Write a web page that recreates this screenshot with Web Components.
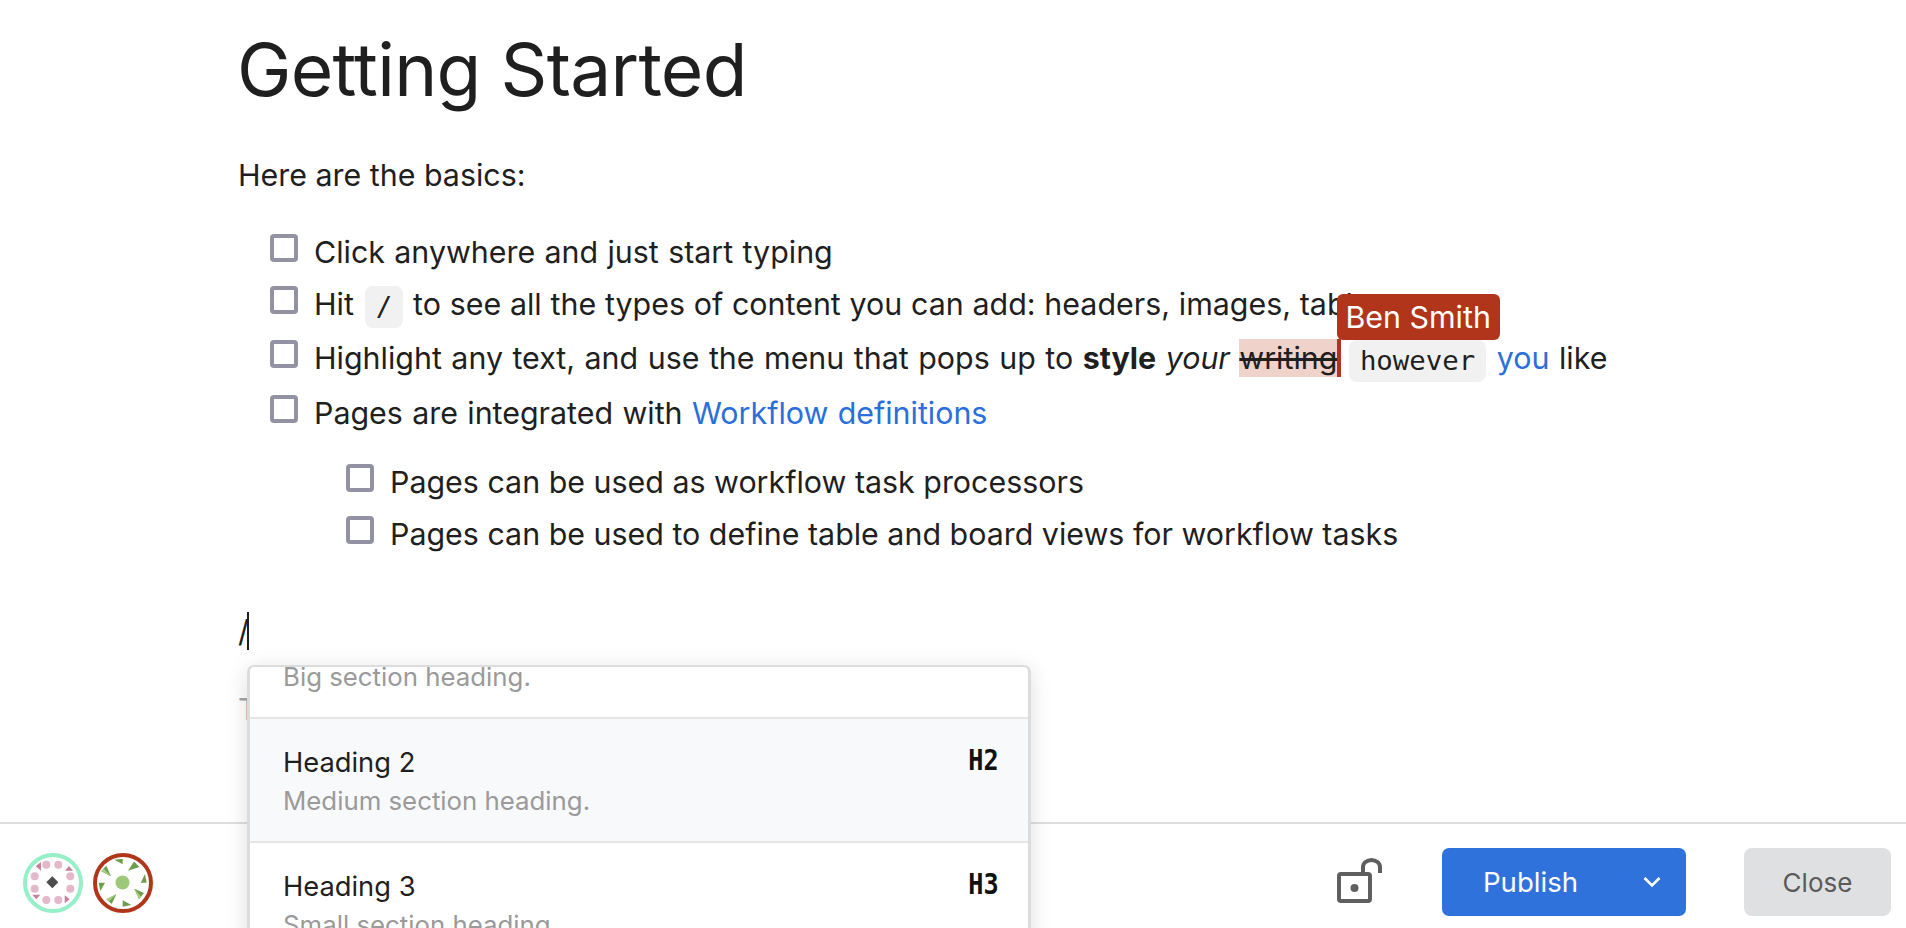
<!DOCTYPE html>
<html>
<head>
<meta charset="utf-8">
<style>
    html, body { margin: 0; padding: 0; height: 100%; overflow: hidden; background: #fff; }
    body { font-family: Inter, "Liberation Sans", sans-serif; color: #1f1f1f; }
</style>
</head>
<body>
<doc-page>
    <h-title>Getting Started</h-title>
    <doc-para>Here are the basics:</doc-para>
    <task-list>
        <task-item loose>Click anywhere and just start typing</task-item>
        <task-item tall>Hit <inline-code>/</inline-code> to see all the types of content you can add: headers, images, tabl</task-item>
        <task-item tall wide>Highlight any text, and use the menu that pops up to <b>style</b> <i>your</i> <remote-sel>writing</remote-sel> <inline-code>however</inline-code> <a-link>you</a-link> like</task-item>
        <task-item loose>Pages are integrated with <a-link>Workflow definitions</a-link></task-item>
    </task-list>
    <task-list nested>
        <task-item>Pages can be used as workflow task processors</task-item>
        <task-item>Pages can be used to define table and board views for workflow tasks</task-item>
    </task-list>
    <slash-line></slash-line>
    <slash-menu>
        <menu-row title="Heading 1" desc="Big section heading." key="H1"></menu-row>
        <menu-row title="Heading 2" desc="Medium section heading." key="H2" active></menu-row>
        <menu-row title="Heading 3" desc="Small section heading." key="H3"></menu-row>
    </slash-menu>
    <app-footer slot="footer"></app-footer>
</doc-page>

<script>
const pageTpl = document.createElement('template')
pageTpl.innerHTML = `
<style>
    :host {
        position: relative;
        display: flex;
        flex-direction: column;
        height: 100vh;
        overflow: hidden;
        font-family: Inter, "Liberation Sans", sans-serif;
        font-size: 30.4px;
        color: #1f1f1f;
    }
    main {
        flex: 1;
        min-height: 0;
        padding: 24px 0 0 238px;
    }
</style>
<main><slot></slot></main>
<slot name="footer"></slot>
`
class DocPage extends HTMLElement {
    constructor() {
        super()
        this.attachShadow({ mode: 'open' })
        this.shadowRoot.appendChild(pageTpl.content.cloneNode(true))
    }
}
customElements.define('doc-page', DocPage)

class HTitle extends HTMLElement {
    constructor() {
        super()
        this.attachShadow({ mode: 'open' }).innerHTML = `
        <style>
            :host { display: block; margin-left: -1px; font-size: 73px; line-height: 92px; font-weight: 400; letter-spacing: -0.7px; color: #1f1f1f; }
        </style><slot></slot>`
    }
}
customElements.define('h-title', HTitle)

class DocPara extends HTMLElement {
    constructor() {
        super()
        this.attachShadow({ mode: 'open' }).innerHTML = `
        <style>
            :host { display: block; line-height: 52px; margin-top: 33px; }
        </style><slot></slot>`
    }
}
customElements.define('doc-para', DocPara)

class TaskList extends HTMLElement {
    constructor() {
        super()
        this.attachShadow({ mode: 'open' }).innerHTML = `
        <style>
            :host { display: block; margin: 25px 0 0 32px; }
            :host([nested]) { margin: 17px 0 0 108px; }
        </style><slot></slot>`
    }
}
customElements.define('task-list', TaskList)

class TaskItem extends HTMLElement {
    constructor() {
        super()
        this.attachShadow({ mode: 'open' }).innerHTML = `
        <style>
            :host { display: flex; align-items: flex-start; gap: 16px; line-height: 52px; white-space: nowrap; }
            :host([loose]) { word-spacing: 0.8px; }
            :host([tall]) { height: 54px; word-spacing: 0.25px; }
            :host([wide]) { height: 55px; word-spacing: 0.95px; }
            .box {
                flex: none;
                box-sizing: border-box;
                width: 28px;
                height: 28px;
                margin-top: 8px;
                border: 4px solid #9292a2;
                border-radius: 4px;
            }
        </style><span class="box"></span><span><slot></slot></span>`
    }
}
customElements.define('task-item', TaskItem)

class InlineCode extends HTMLElement {
    constructor() {
        super()
        this.attachShadow({ mode: 'open' }).innerHTML = `
        <style>
            :host {
                display: inline-block;
                font-family: "DejaVu Sans Mono", "Liberation Mono", monospace;
                font-size: 27.4px;
                line-height: 42px;
                padding: 0 11px;
                margin: 0 1px 0 2px;
                background: #f1f1f1;
                border-radius: 8px;
                vertical-align: -1px;
            }
        </style><slot></slot>`
    }
}
customElements.define('inline-code', InlineCode)

class ALink extends HTMLElement {
    constructor() {
        super()
        this.attachShadow({ mode: 'open' }).innerHTML = `<style>:host { color: #2a6fdb; }</style><slot></slot>`
    }
}
customElements.define('a-link', ALink)

// someone else's selection, with their name flag on the caret
class RemoteSel extends HTMLElement {
    constructor() {
        super()
        this.attachShadow({ mode: 'open' }).innerHTML = `
        <style>
            :host { position: relative; display: inline-block; line-height: 38px; background: #efd3cb; text-decoration: line-through; }
            .caret { position: absolute; right: -4px; top: 0; bottom: 0; width: 4px; background: #b0351a; }
            .flag {
                position: absolute;
                left: 100%;
                bottom: 37px;
                height: 46px;
                padding: 0 9px 0 8px;
                line-height: 46px;
                font-size: 30.4px;
                word-spacing: 0;
                color: #fff;
                background: #b0351a;
                border-radius: 6px;
                white-space: nowrap;
            }
        </style><slot></slot><span class="caret"></span><span class="flag">Ben Smith</span>`
    }
}
customElements.define('remote-sel', RemoteSel)

class SlashLine extends HTMLElement {
    constructor() {
        super()
        this.attachShadow({ mode: 'open' }).innerHTML = `
        <style>
            :host { display: block; margin-top: 52px; height: 38px; line-height: 38px; position: relative; }
            .caret { position: absolute; left: 9px; top: 0; width: 2px; height: 38px; background: #1f1f1f; }
            .hint { position: absolute; left: 0; top: 78px; color: #a6a6a6; line-height: 38px; }
        </style>/<span class="caret"></span><span class="hint">T</span>`
    }
}
customElements.define('slash-line', SlashLine)

class SlashMenu extends HTMLElement {
    constructor() {
        super()
        this.attachShadow({ mode: 'open' }).innerHTML = `
        <style>
            :host {
                position: absolute;
                left: 247px;
                top: 665px;
                width: 784px;
                height: 300px;
                box-sizing: border-box;
                overflow: hidden;
                background: #fff;
                border: 2px solid #dcdcdc;
                border-width: 2px 3px 0 3px;
                border-radius: 7px 7px 0 0;
                box-shadow: 0 4px 22px rgba(0,0,0,0.13);
            }
            .scroll { margin-top: -72px; }
        </style><div class="scroll"><slot></slot></div>`
    }
}
customElements.define('slash-menu', SlashMenu)

class MenuRow extends HTMLElement {
    constructor() {
        super()
        this.attachShadow({ mode: 'open' }).innerHTML = `
        <style>
            :host {
                display: flex;
                justify-content: space-between;
                box-sizing: border-box;
                height: 124px;
                padding: 25px 29px 0 33px;
                border-bottom: 2px solid #e4e5e7;
                background: #fff;
            }
            :host([active]) { background: #f8f9fb; }
            .title { font-size: 27.3px; line-height: 38px; color: #1f1f1f; }
            .desc { font-size: 25.8px; line-height: 38px; color: #9a9a9a; }
            .key {
                font-family: "DejaVu Sans Mono", "Liberation Mono", monospace;
                font-weight: 700;
                font-size: 28px;
                line-height: 34px;
                color: #111;
                transform: scaleX(0.9);
                transform-origin: right center;
            }
        </style>
        <div><div class="title"></div><div class="desc"></div></div>
        <div class="key"></div>`
        this.shadowRoot.querySelector('.title').textContent = this.getAttribute('title')
        this.shadowRoot.querySelector('.desc').textContent = this.getAttribute('desc')
        this.shadowRoot.querySelector('.key').textContent = this.getAttribute('key')
    }
}
customElements.define('menu-row', MenuRow)

const footerTpl = document.createElement('template')
footerTpl.innerHTML = `
<style>
    :host {
        display: flex;
        align-items: center;
        flex: none;
        box-sizing: border-box;
        height: 106px;
        padding: 0 15px 0 23px;
        border-top: 2px solid #dedede;
        background: #fff;
    }
    .avatars { display: flex; gap: 10px; margin-top: 14px; }
    svg { display: block; }
    .right { display: flex; align-items: center; margin-left: auto; margin-top: 12px; }
    .lock { margin-right: 59px; margin-top: -3px; }
    button {
        font: 400 27.6px Inter, "Liberation Sans", sans-serif;
        height: 68px;
        border: 0;
        padding: 0;
    }
    .publish {
        width: 244px;
        display: flex;
        align-items: center;
        justify-content: space-between;
        padding: 0 25px 0 41px;
        box-sizing: border-box;
        color: #fff;
        background: #2f72dc;
        border-radius: 7px;
    }
    .close {
        width: 147px;
        margin-left: 58px;
        font-size: 26px;
        color: #5a5a5a;
        background: #dfe0e2;
        border-radius: 8px;
    }
</style>
<div class="avatars">
    <svg width="60" height="60" viewBox="0 0 60 60">
        <circle cx="30" cy="30" r="28" fill="#fff" stroke="#95efc8" stroke-width="4"/>
        <g fill="#e3b8c8">
            <circle cx="23.3" cy="11.7" r="4"/><circle cx="35.3" cy="11.7" r="4"/>
            <circle cx="47.3" cy="23.3" r="4"/><circle cx="47.3" cy="35.7" r="4"/>
            <circle cx="35.3" cy="47" r="4"/><circle cx="23.3" cy="47" r="4"/>
            <circle cx="11.7" cy="35.7" r="4"/><circle cx="11.7" cy="23.3" r="4"/>
        </g>
        <g fill="#c57f97">
            <polygon points="18,9 18,17.7 12.7,13.3"/>
            <polygon points="42,17.7 50,17.7 46,13"/>
            <polygon points="9.3,41.7 17.3,41.7 13.3,46.3"/>
            <polygon points="41.7,42.3 41.7,50.3 46.7,46.3"/>
        </g>
        <polygon points="29.3,23.3 35.3,29.3 29.3,35.3 23.3,29.3" fill="#4d4d4d"/>
    </svg>
    <svg width="60" height="60" viewBox="0 0 60 60">
        <circle cx="30" cy="30" r="28" fill="#fff" stroke="#b0351a" stroke-width="4"/>
        <circle cx="29.5" cy="29.5" r="7" fill="#9cc878"/>
        <g fill="#6e9e4c">
            <polygon points="21.3,6.7 29.7,5.7 29.7,11.3"/>
            <polygon points="47.7,29.7 52,21 53.7,29.7"/>
            <polygon points="29.7,47.3 38.3,52 29.7,53.7"/>
            <polygon points="5.7,29.7 12,29.7 7.3,38.3"/>
            <polygon points="35,17.7 41,8.5 46.5,14"/>
            <polygon points="41.3,35.7 51,40 46,46.3"/>
            <polygon points="23.3,41.3 13.3,46.3 18.7,51"/>
            <polygon points="18,23.3 8.3,18.3 13.3,12.7"/>
        </g>
        <g fill="#a5cf7f">
            <polygon points="35,17.7 41,8.5 38,13.5"/>
            <polygon points="41.3,35.7 46,46.3 48,43.5"/>
            <polygon points="23.3,41.3 13.3,46.3 16,48.5"/>
            <polygon points="18,23.3 8.3,18.3 10.8,15.5"/>
        </g>
    </svg>
</div>
<div class="right">
    <svg class="lock" width="46" height="46" viewBox="0 0 46 46">
        <rect x="2" y="16" width="31" height="27" rx="2" fill="none" stroke="#5f5f5f" stroke-width="4"/>
        <circle cx="17.5" cy="30" r="4" fill="#5f5f5f"/>
        <path d="M26 16 V9 a8.5 7 0 0 1 17 0 V15" fill="none" stroke="#5f5f5f" stroke-width="4"/>
    </svg>
    <button class="publish">Publish
        <svg width="18" height="12" viewBox="0 0 18 12"><path d="M1.5 2 L9 9.5 L16.5 2" fill="none" stroke="#fff" stroke-width="2.6"/></svg>
    </button>
    <button class="close">Close</button>
</div>
`
class AppFooter extends HTMLElement {
    constructor() {
        super()
        this.attachShadow({ mode: 'open' })
        this.shadowRoot.appendChild(footerTpl.content.cloneNode(true))
    }
}
customElements.define('app-footer', AppFooter)
</script>
</body>
</html>
